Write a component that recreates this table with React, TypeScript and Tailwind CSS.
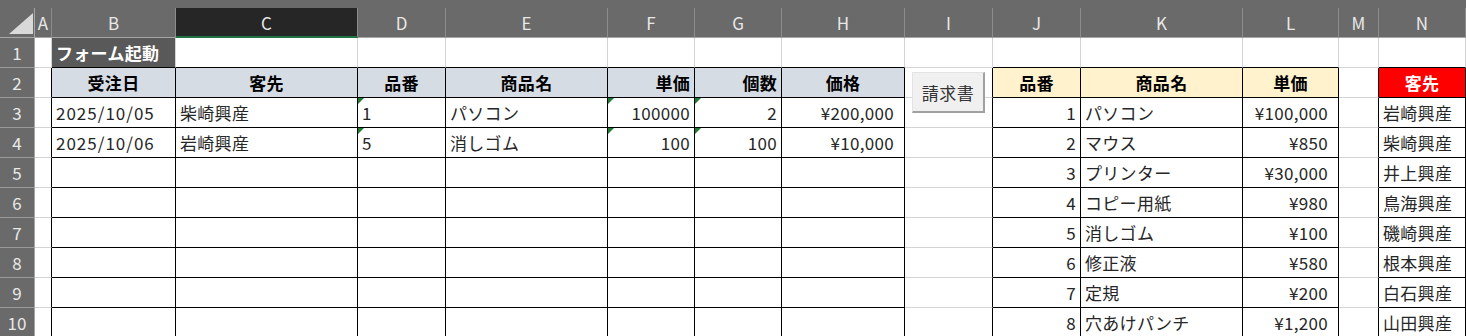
import React from 'react'

type Align = 'l' | 'c' | 'r'

interface CellInfo {
  text?: string
  align?: Align
  bold?: boolean
  fill?: string
  color?: string
  tri?: boolean
  wide?: boolean
  date?: boolean
}

const LETTERS = ['A', 'B', 'C', 'D', 'E', 'F', 'G', 'H', 'I', 'J', 'K', 'L', 'M', 'N']
const ROWS = [1, 2, 3, 4, 5, 6, 7, 8, 9, 10]

const orders = [
  ['2025/10/05', '柴崎興産', '1', 'パソコン', '100000', '2', '¥200,000'],
  ['2025/10/06', '岩崎興産', '5', '消しゴム', '100', '100', '¥10,000'],
]

const products: [string, string, string][] = [
  ['1', 'パソコン', '¥100,000'],
  ['2', 'マウス', '¥850'],
  ['3', 'プリンター', '¥30,000'],
  ['4', 'コピー用紙', '¥980'],
  ['5', '消しゴム', '¥100'],
  ['6', '修正液', '¥580'],
  ['7', '定規', '¥200'],
  ['8', '穴あけパンチ', '¥1,200'],
]

const clients = ['岩崎興産', '柴崎興産', '井上興産', '鳥海興産', '磯崎興産', '根本興産', '白石興産', '山田興産']

const orderHeaders: [string, Align][] = [
  ['受注日', 'c'],
  ['客先', 'c'],
  ['品番', 'c'],
  ['商品名', 'c'],
  ['単価', 'r'],
  ['個数', 'r'],
  ['価格', 'c'],
]

function inTable(r: number, c: number) {
  if (r < 2 || r > 10) return false
  if (c >= 2 && c <= 8) return true
  if (c >= 10 && c <= 12) return true
  if (c === 14) return true
  return false
}

function cellAt(r: number, c: number): CellInfo {
  if (r === 1 && c === 2) return { text: 'フォーム起動', bold: true, fill: 'bg-[#595959]', color: 'text-white', align: 'l' }
  if (r === 2) {
    if (c >= 2 && c <= 8) {
      const [t, a] = orderHeaders[c - 2]
      return { text: t, align: a, bold: true, fill: 'bg-[#d6dce4]', color: 'text-black' }
    }
    if (c === 10) return { text: '品番', align: 'c', bold: true, fill: 'bg-[#fff2cc]', color: 'text-black' }
    if (c === 11) return { text: '商品名', align: 'c', bold: true, fill: 'bg-[#fff2cc]', color: 'text-black' }
    if (c === 12) return { text: '単価', align: 'c', bold: true, fill: 'bg-[#fff2cc]', color: 'text-black' }
    if (c === 14) return { text: '客先', align: 'c', bold: true, fill: 'bg-[#ff0000]', color: 'text-white' }
  }
  if (r >= 3 && r <= 4 && c >= 2 && c <= 8) {
    const v = orders[r - 3][c - 2]
    if (c === 2) return { text: v, align: 'l', date: true }
    if (c === 3 || c === 5) return { text: v, align: 'l' }
    if (c === 4) return { text: v, align: 'l', tri: true }
    if (c === 6 || c === 7) return { text: v, align: 'r', tri: true }
    return { text: v, align: 'r', wide: true }
  }
  if (r >= 3) {
    const p = products[r - 3]
    if (c === 10) return { text: p[0], align: 'r' }
    if (c === 11) return { text: p[1], align: 'l' }
    if (c === 12) return { text: p[2], align: 'r', wide: true }
    if (c === 14) return { text: clients[r - 3], align: 'l' }
  }
  return {}
}

function SheetCell({ r, c }: { r: number; c: number }) {
  const info = cellAt(r, c)
  const blackR = inTable(r, c) || inTable(r, c + 1)
  const blackB = inTable(r, c) || inTable(r + 1, c)
  const justify =
    info.align === 'c' ? 'justify-center' : info.align === 'r' ? 'justify-end' : 'justify-start'
  const pad = info.align === 'r' ? (info.wide ? 'pr-[10px]' : 'pr-[4px]') : info.align === 'l' ? 'pl-[4px]' : ''
  return (
    <div
      className={[
        'relative flex items-center border-r border-b whitespace-nowrap overflow-visible',
        blackR ? 'border-r-black' : 'border-r-[#d4d4d4]',
        blackB ? 'border-b-black' : 'border-b-[#d4d4d4]',
        info.fill ?? 'bg-white',
        info.color ?? 'text-[#262626]',
        info.bold ? 'font-bold' : 'font-normal',
        info.date ? 'tracking-[1px]' : 'tracking-[0.3px]',
        justify,
        pad,
      ].join(' ')}
    >
      {info.tri && (
        <span className="absolute left-0 top-0 w-0 h-0 border-t-[6px] border-r-[6px] border-t-[#1e7b34] border-r-transparent" />
      )}
      {info.text}
    </div>
  )
}

export default function App() {
  return (
    <div className="relative w-[1466px] h-[336px] overflow-hidden bg-white font-['Noto_Sans_CJK_JP',sans-serif] text-[17px] leading-none">
      <div className="h-[8px] bg-[#6a6a6a]" />
      <div className="grid grid-cols-[35px_17px_124px_182px_88px_162px_87px_87px_123px_88px_88px_162px_96px_40px_87px] auto-rows-[30px]">
        {/* column headers */}
        <div className="relative bg-[#6a6a6a] border-r border-b border-r-[#a6a6a6] border-b-[#a6a6a6]">
          <svg className="absolute left-[9px] top-[5px]" width="24" height="21" viewBox="0 0 24 21">
            <polygon points="24,0 24,21 0,21" fill="#d9d9d9" />
          </svg>
        </div>
        {LETTERS.map((l) => (
          <div
            key={l}
            className={
              l === 'C'
                ? 'flex items-center justify-center bg-[#262626] border-r border-b-2 border-r-[#8c8c8c] border-b-[#217346] text-[#e8e8e8]'
                : 'flex items-center justify-center bg-[#6a6a6a] border-r border-b border-r-[#8c8c8c] border-b-[#a6a6a6] text-[#e8e8e8]'
            }
          >
            {l}
          </div>
        ))}

        {ROWS.map((r) => (
          <React.Fragment key={r}>
            <div className="flex items-center justify-center bg-[#6a6a6a] border-r border-b border-r-[#a6a6a6] border-b-[#9a9a9a] text-[#e8e8e8]">
              {r}
            </div>
            {LETTERS.map((_, i) => (
              <SheetCell key={i} r={r} c={i + 1} />
            ))}
          </React.Fragment>
        ))}
      </div>

      {/* form button */}
      <button className="absolute left-[912px] top-[72px] w-[73px] h-[41px] flex items-center justify-center bg-[#f0f0f0] border-t border-l border-t-[#e3e3e3] border-l-[#e3e3e3] border-r-2 border-b-2 border-r-[#a0a0a0] border-b-[#a0a0a0] text-[17px] tracking-[0.5px] text-[#333333]">
        請求書
      </button>
    </div>
  )
}
